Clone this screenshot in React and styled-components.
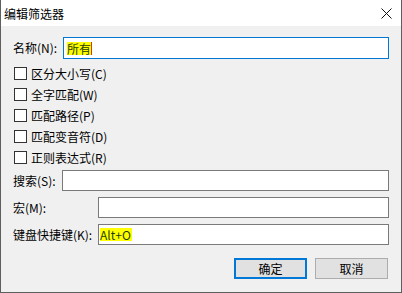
import React from "react";
import styled, { createGlobalStyle } from "styled-components";

const GlobalStyle = createGlobalStyle`
  html, body {
    margin: 0;
    padding: 0;
    background: #f0f0f0;
  }
  body {
    font-family: "Noto Sans CJK SC", "Noto Sans", sans-serif;
    font-size: 12px;
    color: #000;
  }
`;

const Window = styled.div`
  width: 402px;
  height: 293px;
  box-sizing: border-box;
  border: 1px solid #5f5f5f;
  border-top: none;
  background: #f0f0f0;
  display: flex;
  flex-direction: column;
`;

const TitleBar = styled.div`
  height: 26px;
  background: #fff;
  display: flex;
  align-items: center;
  justify-content: space-between;
  padding: 1px 9px 0 3px;
  box-sizing: border-box;
  flex-shrink: 0;
`;

const Title = styled.span`
  font-size: 12px;
  line-height: 14px;
`;

const Body = styled.div`
  display: flex;
  flex-direction: column;
  padding: 11px 12px 0 12px;
`;

const FieldRow = styled.div`
  display: flex;
  align-items: center;
  margin-top: ${(p) => p.$top || 0}px;
`;

const Label = styled.span`
  width: ${(p) => p.$width}px;
  flex-shrink: 0;
  white-space: nowrap;
  line-height: 14px;
`;

const Field = styled.div`
  flex: 1;
  height: ${(p) => p.$height || 21}px;
  box-sizing: border-box;
  background: #fff;
  border: 1px solid ${(p) => (p.$focused ? "#0078d7" : "#7a7a7a")};
  display: flex;
  align-items: center;
  padding-left: ${(p) => p.$pad || 2}px;
`;

const Selected = styled.span`
  background: #ffff00;
  color: #1f3d00;
  line-height: 13px;
  height: 13px;
  display: inline-flex;
  align-items: center;
  padding-right: ${(p) => p.$padRight || 0}px;
`;

const Caret = styled.span`
  width: 1px;
  height: 13px;
  background: #e0301e;
`;

const Checks = styled.div`
  display: flex;
  flex-direction: column;
  margin-top: 4px;
`;

const CheckRow = styled.label`
  height: 21px;
  display: flex;
  align-items: center;
  gap: 4px;
  padding-left: 1px;
`;

const Box = styled.span`
  width: 13px;
  height: 13px;
  box-sizing: border-box;
  border: 1px solid #333;
  background: #fff;
  flex-shrink: 0;
`;

const Buttons = styled.div`
  display: flex;
  justify-content: flex-end;
  gap: 8px;
  margin-top: 13px;
  padding-right: 1px;
`;

const Button = styled.div`
  width: 73px;
  height: 21px;
  box-sizing: border-box;
  background: #e1e1e1;
  border: ${(p) => (p.$primary ? "2px solid #0078d7" : "1px solid #adadad")};
  display: flex;
  align-items: center;
  justify-content: center;
  line-height: 14px;
`;

const options = ["区分大小写(C)", "全字匹配(W)", "匹配路径(P)", "匹配变音符(D)", "正则表达式(R)"];

export default function App() {
  return (
    <>
      <GlobalStyle />
      <Window>
        <TitleBar>
          <Title>编辑筛选器</Title>
          <svg width="11" height="11" viewBox="0 0 11 11">
            <path d="M0.5 0.5 L10.5 10.5 M10.5 0.5 L0.5 10.5" stroke="#111" strokeWidth="1" fill="none" />
          </svg>
        </TitleBar>
        <Body>
          <FieldRow>
            <Label $width={50}>名称(N):</Label>
            <Field $focused $height={22} $pad={3}>
              <Selected>所有</Selected>
              <Caret />
            </Field>
          </FieldRow>
          <Checks>
            {options.map((o) => (
              <CheckRow key={o}>
                <Box />
                <span>{o}</span>
              </CheckRow>
            ))}
          </Checks>
          <FieldRow $top={2}>
            <Label $width={49}>搜索(S):</Label>
            <Field />
          </FieldRow>
          <FieldRow $top={6}>
            <Label $width={85}>宏(M):</Label>
            <Field />
          </FieldRow>
          <FieldRow $top={6}>
            <Label $width={85}>键盘快捷键(K):</Label>
            <Field $pad={1}>
              <Selected $padRight={1}>Alt+O</Selected>
            </Field>
          </FieldRow>
          <Buttons>
            <Button $primary>确定</Button>
            <Button>取消</Button>
          </Buttons>
        </Body>
      </Window>
    </>
  );
}
